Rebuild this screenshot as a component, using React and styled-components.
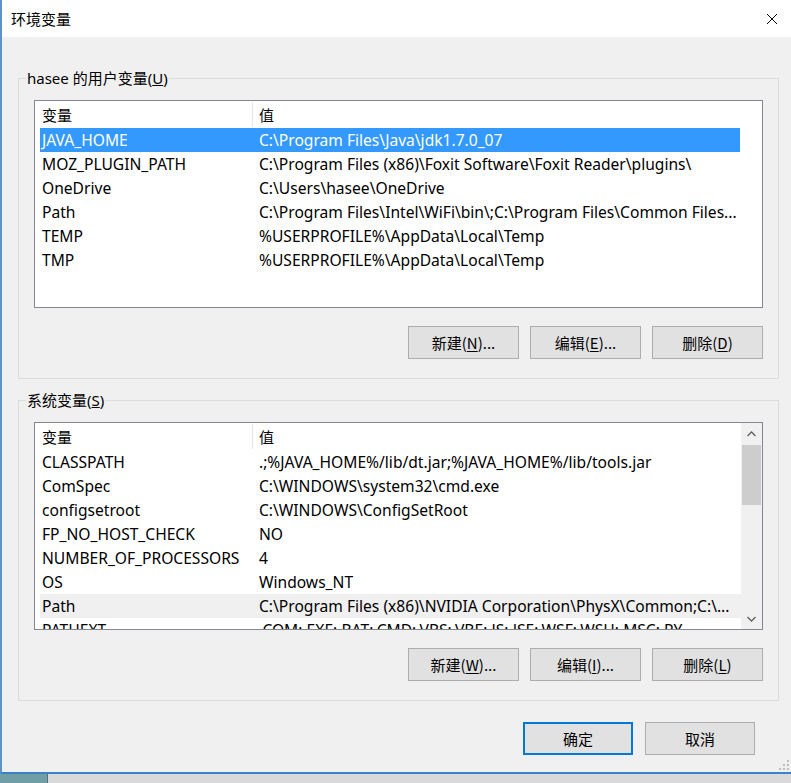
import React from 'react';
import styled, { createGlobalStyle } from 'styled-components';

const Global = createGlobalStyle`
  html, body { margin: 0; padding: 0; }
  body {
    width: 791px; height: 783px; overflow: hidden;
    background: #d6d6d6;
    font-family: "Noto Sans", "Noto Sans CJK SC", sans-serif;
    font-size: 15px; color: #000;
  }
  * { box-sizing: border-box; }
`;

const Screen = styled.div`
  display: flex; flex-direction: column;
  width: 791px; height: 783px;
`;

const Window = styled.div`
  position: relative;
  display: flex; flex-direction: column;
  height: 774px;
  background: #f0f0f0;
  border-left: 2px solid #5d93c9;
  border-bottom: 2px solid #3a82c8;
`;

const TitleBar = styled.div`
  height: 37px; flex: none;
  display: flex; align-items: center; justify-content: space-between;
  background: #fff;
  padding: 0 13px 0 9px;
`;

const Title = styled.div`
  font-size: 15px; line-height: 20px;
  font-family: "Noto Sans CJK SC", sans-serif;
`;

const CloseBtn = styled.div`
  width: 12px; height: 12px; display: flex;
`;

const Body = styled.div`
  flex: 1;
  display: flex; flex-direction: column;
  padding: 31px 12px 0 16px;
`;

const Group = styled.fieldset`
  margin: ${p => p.$top || 0}px 0 0 0;
  border: 1px solid #dcdcdc;
  padding: ${p => p.$pad}px 15px 19px 15px;
  min-width: 0;
`;

const Legend = styled.legend`
  margin-left: -8px;
  padding: 0 1px;
  line-height: 20px;
  font-size: 15px;
`;

const ListBox = styled.div`
  height: 208px;
  border: 1px solid #828790;
  background: #fff;
  display: flex;
  overflow: hidden;
`;

const ListContent = styled.div`
  flex: 1; min-width: 0;
  padding-left: 5px;
  padding-right: ${p => (p.$reserve ? 22 : 0)}px;
`;

const Header = styled.div`
  display: flex; height: 27px; align-items: stretch;
`;

const HeadCell = styled.div`
  display: flex; align-items: center;
  font-family: "Noto Sans CJK SC", sans-serif;
  ${p => p.$first ? `
    width: 213px; padding-left: 2px;
    border-right: 1px solid #e5e5e5;
    margin: 1px 0 1px 0;
  ` : `
    flex: 1; padding-left: 6px;
  `}
`;

const Row = styled.div`
  display: flex; height: 24px; align-items: flex-start;
  white-space: nowrap;
  font-size: 15.6px;
  background: ${p => (p.$sel ? '#3399ff' : p.$hover ? '#f0f0f0' : 'transparent')};
  color: ${p => (p.$sel ? '#fff' : '#000')};
`;

const Cell = styled.div`
  padding: 1px 0 0 2px;
  overflow: hidden;
  line-height: 23px;
  ${p => (p.$first ? 'width: 217px; flex: none;' : 'flex: 1; min-width: 0;')}
`;

const ScrollBar = styled.div`
  width: 21px; flex: none;
  background: #f0f0f0;
  display: flex; flex-direction: column; align-items: stretch;
`;

const ScrollArrow = styled.div`
  height: 21px; display: flex; align-items: center; justify-content: center;
`;

const Track = styled.div`
  flex: 1; padding: 1px 0 0 0;
`;

const Thumb = styled.div`
  height: 60px; margin: 0 1px; background: #cdcdcd;
`;

const ButtonRow = styled.div`
  display: flex; justify-content: flex-end; gap: 11px;
  margin-top: 18px;
`;

const Button = styled.div`
  width: ${p => p.$w || 111}px; height: 33px;
  display: flex; align-items: center; justify-content: center;
  background: #e1e1e1;
  border: ${p => (p.$default ? '2px solid #0078d7' : '1px solid #adadad')};
  font-size: 15px;
  font-family: "Noto Sans CJK SC", sans-serif;
  u { text-underline-offset: 2px; }
`;

const Footer = styled.div`
  display: flex; justify-content: flex-end; gap: 12px;
  margin-top: 21px;
  padding-right: 24px;
`;

const Grip = styled.svg`
  position: absolute; right: 1px; bottom: 1px;
`;

const Taskbar = styled.div`
  flex: 1; display: flex; background: #d9d9d9;
`;

const TaskStart = styled.div`
  width: 48px; background: #6f9ea6; border-right: 1px solid #55707a;
`;

const userVars = [
  ['JAVA_HOME', 'C:\\Program Files\\Java\\jdk1.7.0_07'],
  ['MOZ_PLUGIN_PATH', 'C:\\Program Files (x86)\\Foxit Software\\Foxit Reader\\plugins\\'],
  ['OneDrive', 'C:\\Users\\hasee\\OneDrive'],
  ['Path', 'C:\\Program Files\\Intel\\WiFi\\bin\\;C:\\Program Files\\Common Files...'],
  ['TEMP', '%USERPROFILE%\\AppData\\Local\\Temp'],
  ['TMP', '%USERPROFILE%\\AppData\\Local\\Temp'],
];

const sysVars = [
  ['CLASSPATH', '.;%JAVA_HOME%/lib/dt.jar;%JAVA_HOME%/lib/tools.jar'],
  ['ComSpec', 'C:\\WINDOWS\\system32\\cmd.exe'],
  ['configsetroot', 'C:\\WINDOWS\\ConfigSetRoot'],
  ['FP_NO_HOST_CHECK', 'NO'],
  ['NUMBER_OF_PROCESSORS', '4'],
  ['OS', 'Windows_NT'],
  ['Path', 'C:\\Program Files (x86)\\NVIDIA Corporation\\PhysX\\Common;C:\\...'],
  ['PATHEXT', '.COM;.EXE;.BAT;.CMD;.VBS;.VBE;.JS;.JSE;.WSF;.WSH;.MSC;.PY'],
];

const Chevron = ({ up }) => (
  <svg width="9" height="6" viewBox="0 0 9 6">
    <polyline
      points={up ? '0.5,5 4.5,1 8.5,5' : '0.5,1 4.5,5 8.5,1'}
      fill="none" stroke="#606060" strokeWidth="1.3"
    />
  </svg>
);

const VarList = ({ rows, sel, hover, scroll }) => (
  <ListBox>
    <ListContent $reserve={!scroll}>
      <Header>
        <HeadCell $first>变量</HeadCell>
        <HeadCell>值</HeadCell>
      </Header>
      {rows.map(([k, v], i) => (
        <Row key={k + i} $sel={i === sel} $hover={i === hover}>
          <Cell $first>{k}</Cell>
          <Cell>{v}</Cell>
        </Row>
      ))}
    </ListContent>
    {scroll && (
      <ScrollBar>
        <ScrollArrow><Chevron up /></ScrollArrow>
        <Track><Thumb /></Track>
        <ScrollArrow><Chevron /></ScrollArrow>
      </ScrollBar>
    )}
  </ListBox>
);

export default function App() {
  return (
    <>
      <Global />
      <Screen>
        <Window>
          <TitleBar>
            <Title>环境变量</Title>
            <CloseBtn>
              <svg width="12" height="12" viewBox="0 0 12 12">
                <path d="M1 1 L11 11 M11 1 L1 11" stroke="#000" strokeWidth="1" fill="none" />
              </svg>
            </CloseBtn>
          </TitleBar>
          <Body>
            <Group $pad={12}>
              <Legend>hasee 的用户变量(<u>U</u>)</Legend>
              <VarList rows={userVars} sel={0} />
              <ButtonRow>
                <Button>新建(<u>N</u>)...</Button>
                <Button>编辑(<u>E</u>)...</Button>
                <Button>删除(<u>D</u>)</Button>
              </ButtonRow>
            </Group>
            <Group $top={11} $pad={12}>
              <Legend>系统变量(<u>S</u>)</Legend>
              <VarList rows={sysVars} hover={6} scroll />
              <ButtonRow>
                <Button>新建(<u>W</u>)...</Button>
                <Button>编辑(<u>I</u>)...</Button>
                <Button>删除(<u>L</u>)</Button>
              </ButtonRow>
            </Group>
            <Footer>
              <Button $w={110} $default>确定</Button>
              <Button $w={110}>取消</Button>
            </Footer>
          </Body>
          <Grip width="12" height="12" viewBox="0 0 12 12">
            {[[9, 1], [9, 5], [5, 5], [9, 9], [5, 9], [1, 9]].map(([x, y]) => (
              <rect key={`${x}-${y}`} x={x} y={y} width="2" height="2" fill="#bdbdbd" />
            ))}
          </Grip>
        </Window>
        <Taskbar>
          <TaskStart />
        </Taskbar>
      </Screen>
    </>
  );
}
